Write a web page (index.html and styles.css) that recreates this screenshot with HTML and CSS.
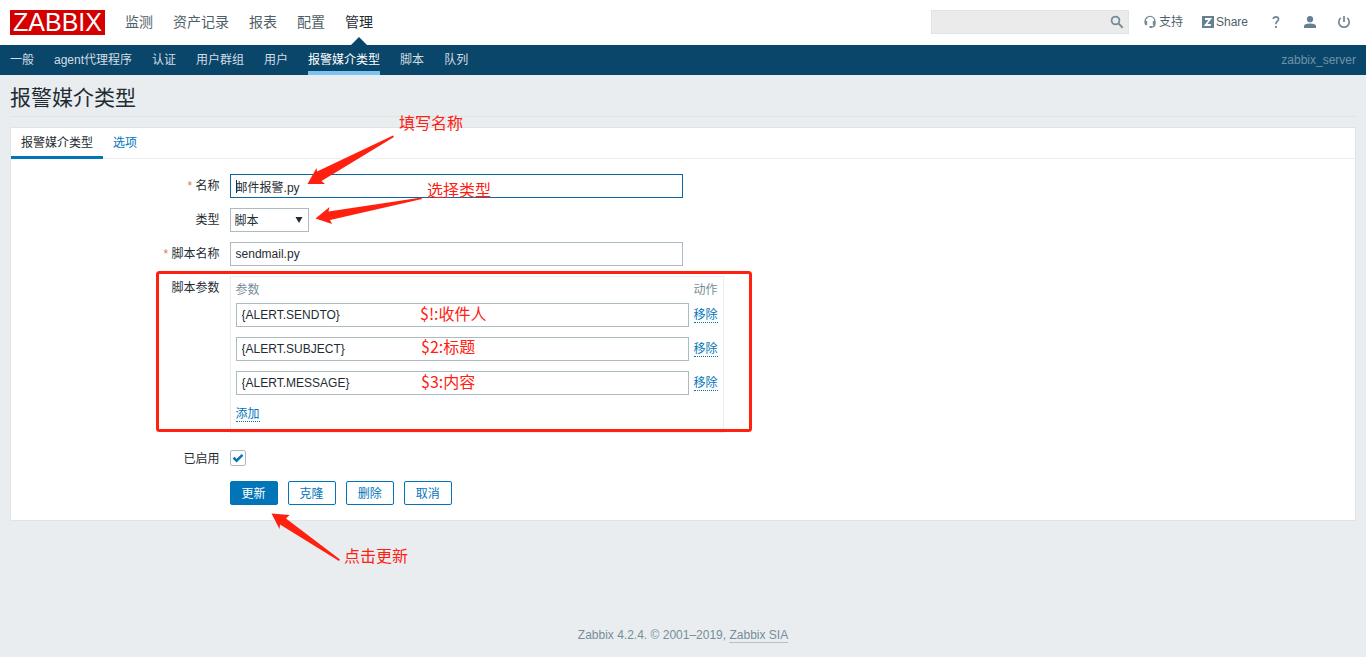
FILE: index.html
```html
<!DOCTYPE html>
<html lang="zh-CN">
<head>
<meta charset="utf-8">
<title>报警媒介类型</title>
<link rel="stylesheet" href="styles.css">
</head>
<body>
<header class="top">
  <a class="logo" href="#">ZABBIX</a>
  <nav class="main-nav">
    <a href="#">监测</a><a href="#">资产记录</a><a href="#">报表</a><a href="#">配置</a><a class="current" href="#">管理</a>
  </nav>
  <div class="tools">
    <form class="search">
      <input type="text" aria-label="搜索">
      <button type="button" aria-label="搜索">
        <svg width="14" height="14" viewBox="0 0 14 14"><circle cx="5.5" cy="5.5" r="3.9" fill="none" stroke="#768d99" stroke-width="1.8"/><path d="M8.4 8.4l4.3 4.3" stroke="#768d99" stroke-width="2"/></svg>
      </button>
    </form>
    <a class="tool support" href="#"><svg width="12" height="14" viewBox="0 0 12 14"><path d="M1.2 7V6.2a4.8 4.8 0 0 1 9.6 0V9.5q0 2.5-3.8 2.5" fill="none" stroke="#768d99" stroke-width="1.4"/><path d="M.5 6h2.700v4.300H1.700L.5 9zM11.500 6H8.800v4.300h1.500L11.500 9zM5.500 11h2.500v2H5.500z" fill="#768d99"/></svg><span>支持</span></a>
    <a class="tool share" href="#"><svg width="12" height="12" viewBox="0 0 12 12"><path d="M0 0h12v12H0z" fill="#65808f"/><path d="M3 3h5.200L3.600 9h5.200" fill="none" stroke="#fff" stroke-width="1.800"/></svg><span>Share</span></a>
    <a class="icon" href="#" aria-label="帮助"><svg width="14" height="14" viewBox="0 0 14 14"><path d="M4.300 4Q4.500 2 7 2Q9.500 2 9.500 4.200Q9.500 5.400 8.200 6.300Q6.900 7.200 6.900 9.300" fill="none" stroke="#768d99" stroke-width="1.800"/><path d="M5.900 11h2v2h-2z" fill="#768d99"/></svg></a>
    <a class="icon" href="#" aria-label="用户资料"><svg width="14" height="14" viewBox="0 0 14 14"><circle cx="7" cy="4.200" r="3.100" fill="#65808f"/><path d="M1 13v-1.800Q1 8.600 7 8.600t6 2.600V13z" fill="#65808f"/></svg></a>
    <a class="icon" href="#" aria-label="退出"><svg width="14" height="14" viewBox="0 0 14 14"><path d="M3.800 2.900a5.200 5.200 0 1 0 6.400 0M7 1v6" fill="none" stroke="#768d99" stroke-width="1.800"/></svg></a>
  </div>
</header>
<nav class="sub-nav">
  <a href="#">一般</a><a href="#">agent代理程序</a><a href="#">认证</a><a href="#">用户群组</a><a href="#">用户</a><a class="current" href="#">报警媒介类型</a><a href="#">脚本</a><a href="#">队列</a>
  <span class="server">zabbix_server</span>
</nav>
<main class="page">
  <h1>报警媒介类型</h1>
  <section class="card">
    <div class="tabs"><a class="current" href="#">报警媒介类型</a><a href="#">选项</a></div>
    <form class="form">
      <div class="row"><label class="required" for="name">名称</label><div class="field"><input class="text focused" id="name" type="text" value="邮件报警.py"><i class="caret"></i></div></div>
      <div class="row"><label for="type">类型</label><div class="field"><select id="type"><option>脚本</option></select><svg class="drop" width="8" height="6" viewBox="0 0 8 6"><path d="M.5 0h7L4 6z" fill="#1f2c33"/></svg></div></div>
      <div class="row"><label class="required" for="script">脚本名称</label><div class="field"><input class="text" id="script" type="text" value="sendmail.py"></div></div>
      <div class="row"><span class="label">脚本参数</span>
        <div class="field">
          <table class="params">
            <thead><tr><th>参数</th><th>动作</th></tr></thead>
            <tbody>
              <tr><td><input class="text" type="text" aria-label="参数 1" value="{ALERT.SENDTO}"></td><td><button class="link" type="button">移除</button></td></tr>
              <tr><td><input class="text" type="text" aria-label="参数 2" value="{ALERT.SUBJECT}"></td><td><button class="link" type="button">移除</button></td></tr>
              <tr><td><input class="text" type="text" aria-label="参数 3" value="{ALERT.MESSAGE}"></td><td><button class="link" type="button">移除</button></td></tr>
              <tr class="add"><td colspan="2"><button class="link" type="button">添加</button></td></tr>
            </tbody>
          </table>
        </div>
      </div>
      <div class="row enabled"><label for="enabled">已启用</label><div class="field"><input class="check" id="enabled" type="checkbox" checked><svg class="tick" width="12" height="10" viewBox="0 0 12 10"><path d="M1.500 4.600L4.600 7.700L10.500 1.800" fill="none" stroke="#0275b8" stroke-width="2.400"/></svg></div></div>
      <div class="row"><span class="label"></span><div class="buttons"><button class="btn primary" type="button">更新</button><button class="btn" type="button">克隆</button><button class="btn" type="button">删除</button><button class="btn" type="button">取消</button></div></div>
    </form>
  </section>
</main>
<footer class="footer">Zabbix 4.2.4. © 2001–2019, <a href="#">Zabbix SIA</a></footer>
<div class="notes">
  <svg width="760" height="580" viewBox="0 0 760 580">
    <rect x="157.500" y="272.500" width="593" height="158" rx="2" fill="none" stroke="#ff2010" stroke-width="3"/>
    <path d="M393 135.500L394 137L321.500 181L325 184L307.500 184L316.500 168L317 171.500Z" fill="#ff2010"/>
    <path d="M421.500 197.500L422 199L330 220L332 224L315.500 218.500L329.500 207L328.500 211.500Z" fill="#ff2010"/>
    <path d="M340 559.500L339 561L280 524.500L279.500 529L271.500 513.500L289.500 515L286 518.500Z" fill="#ff2010"/>
  </svg>
  <span class="note n-name">填写名称</span>
  <span class="note n-type">选择类型</span>
  <span class="note n-to">$!:收件人</span>
  <span class="note n-subject">$2:标题</span>
  <span class="note n-message">$3:内容</span>
  <span class="note n-update">点击更新</span>
</div>
</body>
</html>
```
FILE: styles.css
```css
* { box-sizing: border-box; }
body {
  margin: 0;
  min-height: 100vh;
  display: flex;
  flex-direction: column;
  position: relative;
  background: #e9edf0;
  color: #1f2c33;
  font: 12px/16px "Liberation Sans", "Noto Sans CJK SC", sans-serif;
}
a { color: inherit; text-decoration: none; }
svg { display: block; }
input, select, button { font: inherit; color: inherit; margin: 0; }

.top { height: 45px; background: #fff; display: flex; align-items: center; padding: 0 10px; }
.logo {
  width: 95px;
  height: 25px;
  background: #d40000;
  color: #fff;
  font: 25px/25px "Liberation Sans", sans-serif;
  text-align: center;
}
.main-nav { display: flex; align-self: stretch; gap: 20px; margin-left: 20px; font-size: 14px; line-height: 44px; color: #4f5f69; }
.main-nav .current { position: relative; color: #1f2c33; }
.main-nav .current::after {
  content: "";
  position: absolute;
  left: 50%;
  bottom: 0;
  margin-left: -8px;
  border: 8px solid transparent;
  border-top: 0;
  border-bottom-color: #0a466a;
}
.tools { display: flex; align-items: center; margin: 0 0 2px auto; color: #4f5f69; }
.search { position: relative; width: 198px; margin-right: 15px; }
.search input { display: block; width: 100%; height: 24px; padding: 0 30px 0 5px; border: 1px solid #dfe4e7; background: #ebebeb; }
.search button { position: absolute; right: 5px; top: 5px; padding: 0; border: 0; background: none; }
.tool { display: flex; align-items: center; gap: 2px; }
.support { gap: 3px; margin-right: 19px; }
.share { margin-right: 21px; }
.icon + .icon { margin-left: 20px; }
.tools .icon:last-child { margin-right: 5px; }

.sub-nav { height: 30px; background: #0a466a; color: #d3dde4; display: flex; gap: 20px; padding: 0 10px; line-height: 30px; }
.sub-nav .current { color: #fff; border-bottom: 4px solid #7cc3f4; }
.server { margin-left: auto; color: #6f93a8; }

.page { padding: 0 10px; }
h1 { margin: 0 0 10px; height: 42px; border-bottom: 1px solid #dfe4e7; font-size: 21px; line-height: 46px; font-weight: 400; }
.card { background: #fff; border: 1px solid #dfe4e7; }
.tabs { display: flex; height: 31px; border-bottom: 1px solid #ebeef0; color: #0275b8; line-height: 30px; }
.tabs a { height: 31px; padding: 0 10px; }
.tabs .current { color: #1f2c33; border-bottom: 3px solid #0275b8; }
.form { display: flex; flex-direction: column; gap: 10px; padding: 15px 10px; }
.row { display: flex; gap: 10px; }
.row > label, .label { width: 15%; flex: none; text-align: right; line-height: 24px; }
.required::before { content: "* "; color: #e0784a; }
.field { position: relative; }
.text { display: block; width: 453px; max-width: 100%; height: 24px; padding: 0 5px; border: 1px solid #acbbc2; background: #fff; outline: 0; }
.focused { border-color: #0b67a0; }
.caret { position: absolute; left: 6px; top: 6px; width: 1px; height: 13px; background: #1f2c33; }
select { display: block; width: 79px; height: 24px; padding: 2px 4px 0; appearance: none; border: 1px solid #acbbc2; border-radius: 0; background: #fff; }
.drop { position: absolute; right: 6px; top: 9px; pointer-events: none; }
.params { border: 1px solid #ebeef0; border-spacing: 0; border-collapse: separate; }
.params th { padding: 5px 0; text-align: left; font-weight: 400; color: #768d99; }
.params td { padding: 0 0 10px; vertical-align: middle; }
.params th:first-child, .params td:first-child { padding-left: 5px; }
.params th:last-child, .params td:last-child { padding-left: 5px; padding-right: 5px; }
.params .add td { padding-top: 1px; }
.link { display: block; height: 16px; padding: 1px 0 0; border: 0; border-bottom: 1px dotted #0275b8; background: none; color: #0275b8; line-height: 14px; }
.enabled { margin: 4px 0 2px; height: 22px; }
.enabled label { line-height: 24px; }
.check { display: block; width: 16px; height: 16px; margin-top: 3px; appearance: none; border: 1px solid #acbbc2; border-radius: 2px; background: #fff; }
.tick { position: absolute; left: 2px; top: 6px; pointer-events: none; }
.buttons { display: flex; gap: 10px; }
.btn { height: 24px; padding: 2px 11px 0; border: 1px solid #0275b8; border-radius: 2px; background: #fff; color: #0275b8; line-height: 20px; }
.primary { background: #0275b8; color: #fff; }

.footer { margin-top: auto; padding: 14px 10px; text-align: center; color: #768d99; }
.footer a { border-bottom: 1px solid #b4c1c9; }

.notes { position: absolute; left: 0; top: 0; pointer-events: none; }
.note { position: absolute; white-space: nowrap; color: #ff2010; font: 16px/20px "Noto Sans CJK SC", sans-serif; }
.n-name { left: 399px; top: 112px; }
.n-type { left: 427px; top: 179px; }
.n-to { left: 420px; top: 303px; }
.n-subject { left: 421px; top: 336px; }
.n-message { left: 421px; top: 371px; }
.n-update { left: 344px; top: 545px; }
```
